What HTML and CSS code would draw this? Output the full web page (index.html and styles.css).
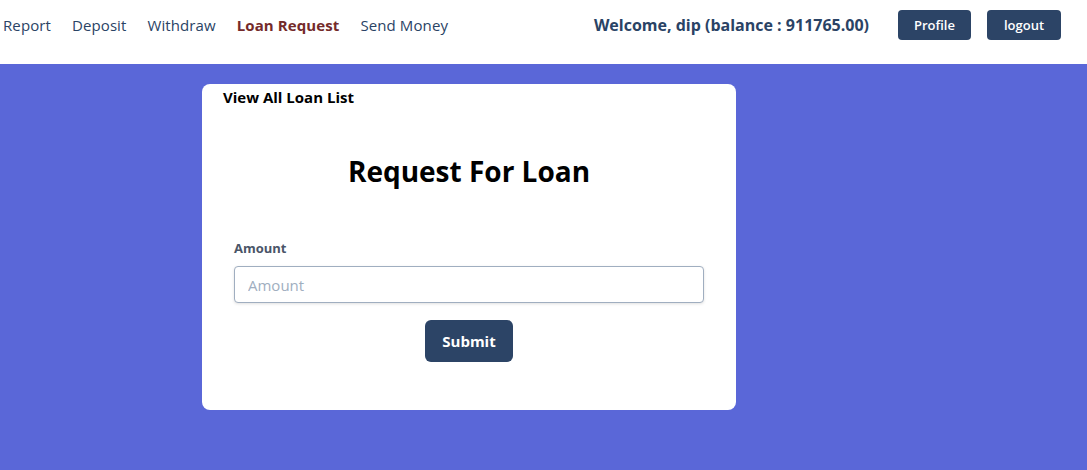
FILE: index.html
```html
<!DOCTYPE html>
<html>
<head>
<meta charset="utf-8">
<link rel="stylesheet" href="styles.css">
</head>
<body>
<header class="topbar">
  <nav class="nav">
    <a class="nav-link">Report</a>
    <a class="nav-link">Deposit</a>
    <a class="nav-link">Withdraw</a>
    <a class="nav-link active">Loan Request</a>
    <a class="nav-link">Send Money</a>
  </nav>
  <div class="user">
    <span class="welcome">Welcome, dip (balance : 911765.00)</span>
    <button class="btn-small">Profile</button>
    <button class="btn-small">logout</button>
  </div>
</header>
<main class="main">
  <section class="card">
    <a class="list-link">View All Loan List</a>
    <h1 class="title">Request For Loan</h1>
    <form class="form">
      <label class="label">Amount</label>
      <input class="input" type="text" placeholder="Amount">
      <div class="actions">
        <button class="btn-submit" type="button">Submit</button>
      </div>
    </form>
  </section>
</main>
</body>
</html>
```
FILE: styles.css
```css
* { box-sizing: border-box; }
html, body { margin: 0; padding: 0; }
body {
  font-family: "Open Sans", "Noto Sans", sans-serif;
  background: #5a67d8;
  min-height: 470px;
}
.topbar {
  height: 64px;
  background: #fff;
  display: flex;
  align-items: flex-start;
  justify-content: space-between;
  padding: 10px 26px 0 3px;
}
.nav {
  display: flex;
  gap: 21px;
  height: 30px;
  align-items: center;
}
.nav-link {
  font-size: 15px;
  letter-spacing: 0.1px;
  color: #2a4365;
  text-decoration: none;
}
.nav-link.active {
  color: #742a2a;
  font-weight: 700;
}
.user {
  display: flex;
  align-items: center;
  height: 30px;
}
.welcome {
  font-size: 16px;
  font-weight: 700;
  color: #2a4365;
  margin-right: 29px;
}
.btn-small {
  height: 30px;
  width: 73px;
  border: none;
  border-radius: 4px;
  background: #2c4466;
  color: #fff;
  font-family: inherit;
  font-size: 13px;
  font-weight: 600;
  padding: 0;
}
.btn-small + .btn-small { margin-left: 16px; width: 74px; }
.main {
  padding: 20px 0 60px 202px;
}
.card {
  width: 534px;
  height: 326px;
  background: #fff;
  border-radius: 8px;
  padding: 3px 32px 0 21px;
}
.list-link {
  display: block;
  font-size: 15px;
  font-weight: 700;
  color: #000;
  line-height: 20px;
}
.title {
  margin: 44px 0 0;
  text-align: center;
  font-size: 28px;
  font-weight: 700;
  line-height: 40px;
  color: #000;
  padding-left: 11px;
}
.form {
  margin-top: 47px;
  padding-left: 11px;
  display: flex;
  flex-direction: column;
}
.label {
  font-size: 13px;
  font-weight: 700;
  color: #4a5568;
  line-height: 20px;
  margin-bottom: 8px;
}
.input {
  width: 470px;
  height: 37px;
  border: 1px solid #a0aec0;
  border-radius: 4px;
  box-shadow: 0 1px 3px rgba(0,0,0,0.12);
  padding: 0 13px;
  font-family: inherit;
  font-size: 15px;
  color: #4a5568;
}
.input::placeholder { color: #a0aec0; }
.actions {
  display: flex;
  justify-content: center;
  margin-top: 17px;
}
.btn-submit {
  width: 88px;
  height: 42px;
  border: none;
  border-radius: 6px;
  background: #2c4466;
  color: #fff;
  font-family: inherit;
  font-size: 15px;
  font-weight: 700;
}
```
